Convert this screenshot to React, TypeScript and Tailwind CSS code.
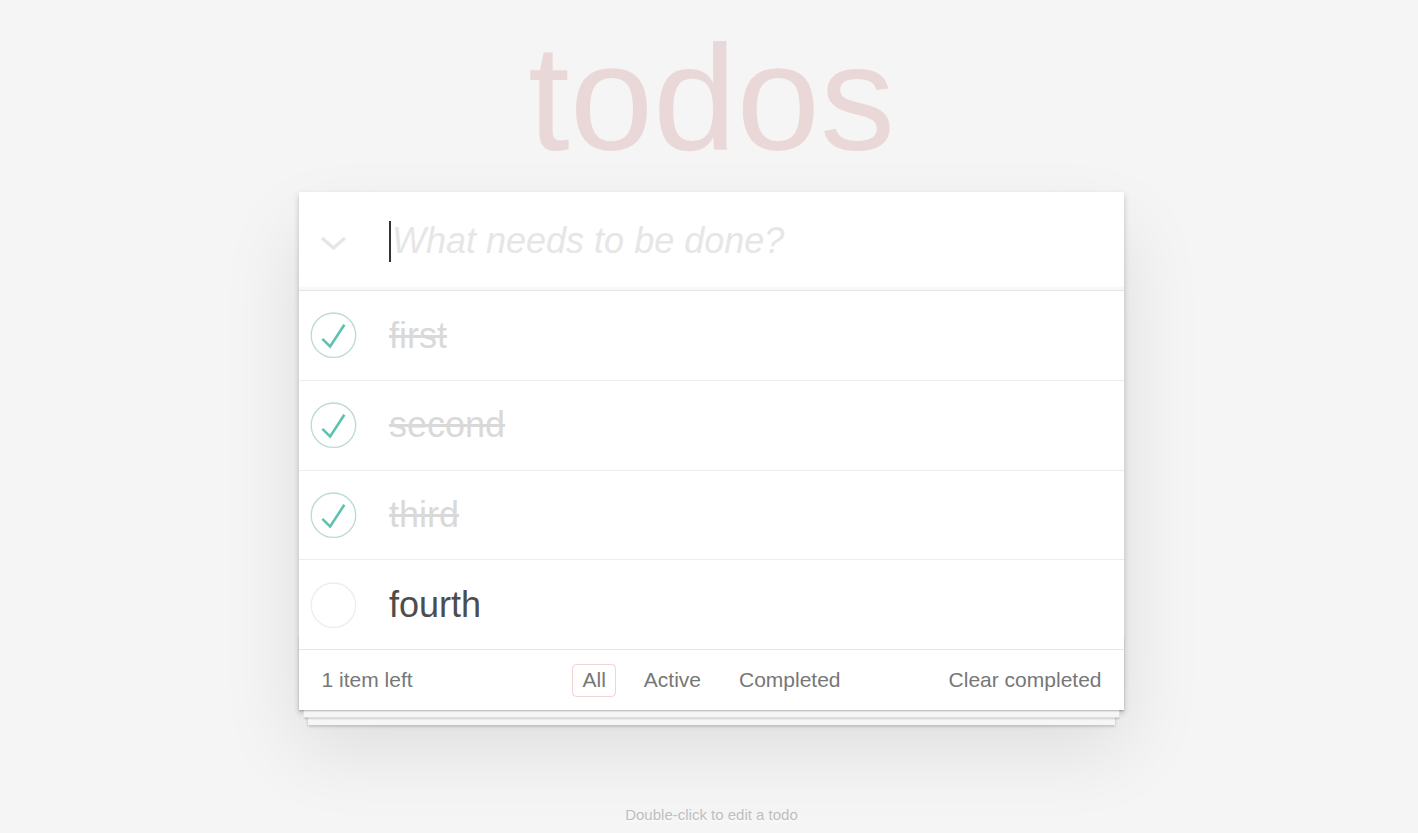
import { useState } from "react";

type Todo = { id: number; title: string; completed: boolean };
type Filter = "all" | "active" | "completed";

const initialTodos: Todo[] = [
  { id: 1, title: "first", completed: true },
  { id: 2, title: "second", completed: true },
  { id: 3, title: "third", completed: true },
  { id: 4, title: "fourth", completed: false },
];

// round checkbox, same drawing as the todomvc background svg
function CheckCircle({ checked }: { checked: boolean }) {
  return (
    <svg width="60" height="60" viewBox="-10 -18 100 135" className="shrink-0">
      <circle
        cx="50"
        cy="50"
        r="50"
        fill="none"
        stroke={checked ? "#bddad5" : "#ededed"}
        strokeWidth="3"
      />
      {checked && (
        <path fill="#5dc2af" d="M72 25L42 71 27 56l-4 4 20 20 34-52z" />
      )}
    </svg>
  );
}

function TodoItem({ todo, onToggle }: { todo: Todo; onToggle: () => void }) {
  return (
    <li className="relative flex items-center border-b border-[#ededed] last:border-b-0">
      <button
        type="button"
        onClick={onToggle}
        className="absolute left-0 top-1/2 -translate-y-1/2 cursor-pointer"
        aria-label="toggle"
      >
        <CheckCircle checked={todo.completed} />
      </button>
      <label
        className={`block w-full pl-[90px] pr-[22.5px] py-[22.5px] text-[36px] leading-[43.8px] break-all ${
          todo.completed ? "text-[#d9d9d9] line-through" : "text-[#4d4d4d]"
        }`}
      >
        {todo.title}
      </label>
    </li>
  );
}

export default function App() {
  const [todos, setTodos] = useState<Todo[]>(initialTodos);
  const [filter, setFilter] = useState<Filter>("all");

  const left = todos.filter((t) => !t.completed).length;
  const shown = todos.filter((t) =>
    filter === "all" ? true : filter === "active" ? !t.completed : t.completed
  );

  const toggle = (id: number) =>
    setTodos((prev) =>
      prev.map((t) => (t.id === id ? { ...t, completed: !t.completed } : t))
    );

  const filters: { key: Filter; label: string }[] = [
    { key: "all", label: "All" },
    { key: "active", label: "Active" },
    { key: "completed", label: "Completed" },
  ];

  return (
    <div className="min-h-screen bg-[#f5f5f5] font-['Liberation_Sans',Arial,sans-serif] text-[#4d4d4d] antialiased">
      <div className="flex flex-col items-center pl-[5px] pt-[23px] pb-[12px]">
        {/* title */}
        <h1 className="h-[150px] mb-[19px] text-[150px] leading-[150px] font-thin text-[rgba(175,47,47,0.15)] text-center">
          todos
        </h1>

        {/* app card */}
        <section className="relative w-[825px] bg-white shadow-[0_3px_6px_0_rgba(0,0,0,0.2),0_37.5px_75px_0_rgba(0,0,0,0.1)]">
          {/* header */}
          <header className="relative flex items-center h-[98px] shadow-[inset_0_-3px_1.5px_rgba(0,0,0,0.03)]">
            <div className="w-[90px] flex justify-center shrink-0">
              <svg width="27" height="15" viewBox="0 0 27 15" className="ml-[-22px] mt-[4px]">
                <polyline
                  points="2,2 13.5,12 25,2"
                  fill="none"
                  stroke="#e6e6e6"
                  strokeWidth="3.5"
                />
              </svg>
            </div>
            <div className="flex items-center text-[36px] leading-[50px]">
              <span className="w-[2px] h-[41px] bg-[#333] mr-[1px]" />
              <span className="italic text-[#e6e6e6]">What needs to be done?</span>
            </div>
          </header>

          {/* list */}
          <ul className="border-t border-[#e6e6e6]">
            {shown.map((t) => (
              <TodoItem key={t.id} todo={t} onToggle={() => toggle(t.id)} />
            ))}
          </ul>

          {/* footer */}
          <footer className="relative grid grid-cols-[1fr_auto_1fr] items-center h-[61px] px-[22.5px] border-t border-[#e6e6e6] text-[21px] text-[#777]">
            <div className="pointer-events-none absolute inset-x-0 bottom-0 h-[75px] shadow-[0_1.5px_1.5px_rgba(0,0,0,0.2),0_12px_0_-4.5px_#f6f6f6,0_13.5px_1.5px_-4.5px_rgba(0,0,0,0.2),0_24px_0_-9px_#f6f6f6,0_25.5px_3px_-9px_rgba(0,0,0,0.2)]" />
            <span className="relative text-left">
              <strong className="font-normal">{left}</strong> item{left === 1 ? "" : "s"} left
            </span>
            <ul className="relative flex items-center gap-[9px]">
              {filters.map((f) => (
                <li key={f.key}>
                  <button
                    type="button"
                    onClick={() => setFilter(f.key)}
                    className={`mx-[4.5px] px-[9px] py-[4.5px] leading-[22px] rounded-[4.5px] border-[1.5px] cursor-pointer ${
                      filter === f.key
                        ? "border-[rgba(175,47,47,0.2)]"
                        : "border-transparent hover:border-[rgba(175,47,47,0.1)]"
                    }`}
                  >
                    {f.label}
                  </button>
                </li>
              ))}
            </ul>
            <button
              type="button"
              onClick={() => setTodos((prev) => prev.filter((t) => !t.completed))}
              className="relative justify-self-end cursor-pointer hover:underline"
            >
              Clear completed
            </button>
          </footer>
        </section>

        {/* info */}
        <p className="mt-[97px] text-[15px] leading-[15px] text-[#bfbfbf] text-center [text-shadow:0_1.5px_0_rgba(255,255,255,0.5)]">
          Double-click to edit a todo
        </p>
      </div>
    </div>
  );
}
